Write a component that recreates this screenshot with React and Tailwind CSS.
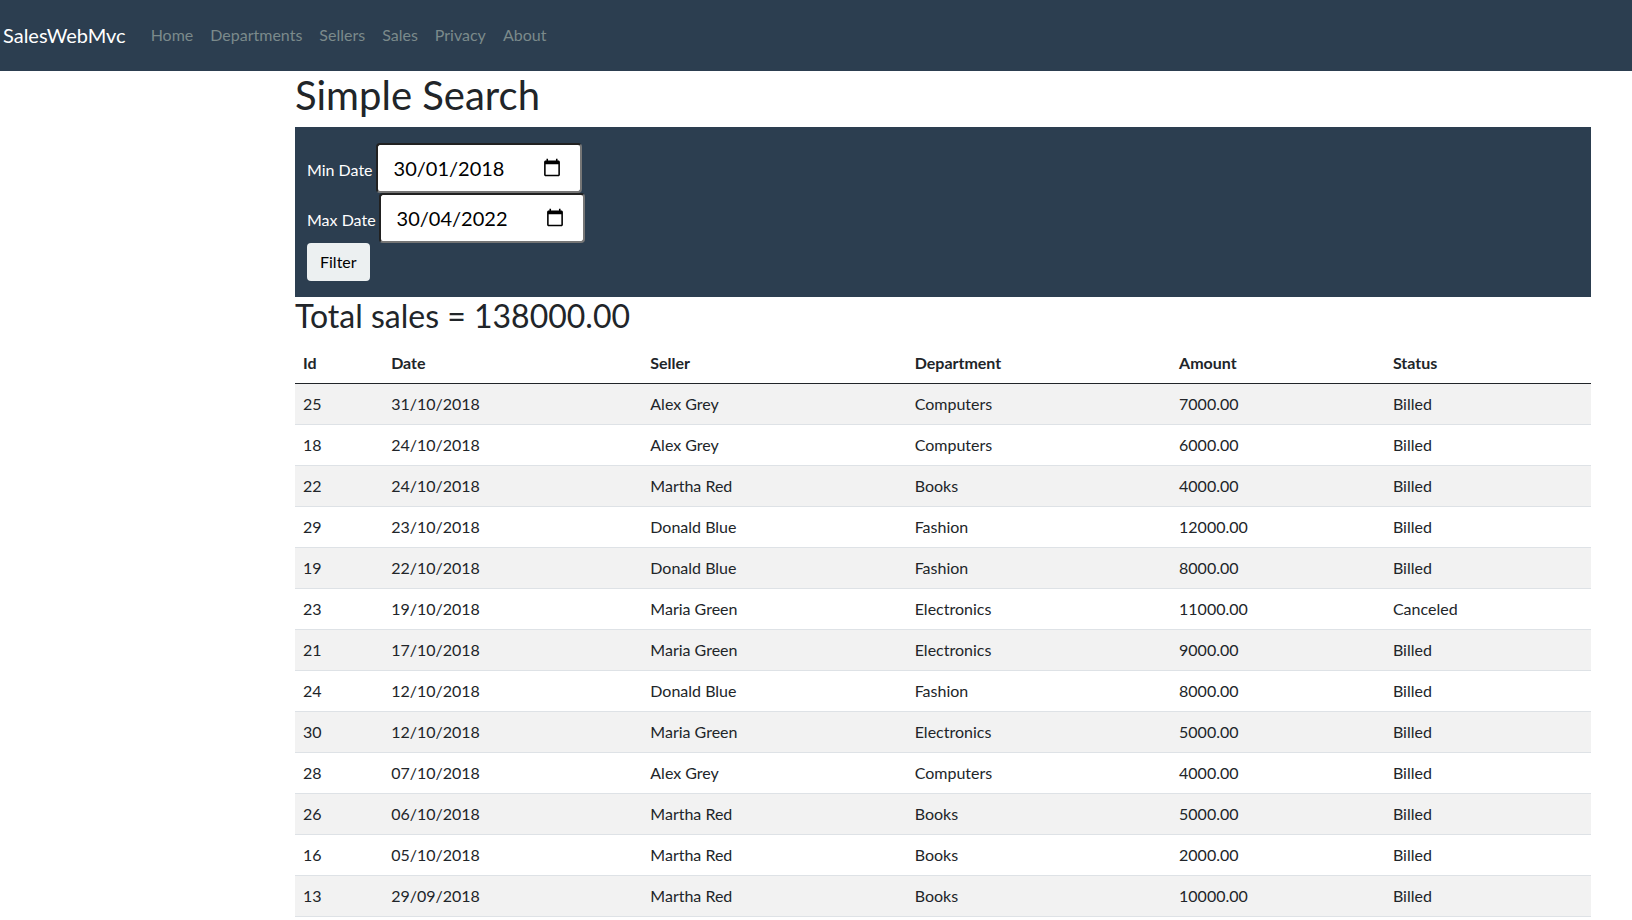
const links = ["Home", "Departments", "Sellers", "Sales", "Privacy", "About"];

const columns = [
  { name: "Id", width: "w-[6.8%]" },
  { name: "Date", width: "w-[20%]" },
  { name: "Seller", width: "w-[20.4%]" },
  { name: "Department", width: "w-[20.4%]" },
  { name: "Amount", width: "w-[16.5%]" },
  { name: "Status", width: "w-[15.9%]" },
];

const sales = [
  [25, "31/10/2018", "Alex Grey", "Computers", "7000.00", "Billed"],
  [18, "24/10/2018", "Alex Grey", "Computers", "6000.00", "Billed"],
  [22, "24/10/2018", "Martha Red", "Books", "4000.00", "Billed"],
  [29, "23/10/2018", "Donald Blue", "Fashion", "12000.00", "Billed"],
  [19, "22/10/2018", "Donald Blue", "Fashion", "8000.00", "Billed"],
  [23, "19/10/2018", "Maria Green", "Electronics", "11000.00", "Canceled"],
  [21, "17/10/2018", "Maria Green", "Electronics", "9000.00", "Billed"],
  [24, "12/10/2018", "Donald Blue", "Fashion", "8000.00", "Billed"],
  [30, "12/10/2018", "Maria Green", "Electronics", "5000.00", "Billed"],
  [28, "07/10/2018", "Alex Grey", "Computers", "4000.00", "Billed"],
  [26, "06/10/2018", "Martha Red", "Books", "5000.00", "Billed"],
  [16, "05/10/2018", "Martha Red", "Books", "2000.00", "Billed"],
  [13, "29/09/2018", "Martha Red", "Books", "10000.00", "Billed"],
];

// The grid on the fields wrapper keeps day/month/year order in every locale.
function DateField({ id, label, value }) {
  return (
    <div className="flex items-baseline gap-[3px]">
      <label htmlFor={id} className="text-white">
        {label}
      </label>
      <input
        id={id}
        name={id}
        type="date"
        defaultValue={value}
        className="h-[50px] w-[206px] rounded border-2 border-[#767676] border-t-[#212121] border-l-[#212121] bg-white px-4 py-2 text-xl leading-[30px] text-black [&::-webkit-datetime-edit-fields-wrapper]:grid [&::-webkit-datetime-edit-fields-wrapper]:grid-cols-[auto_auto_auto_auto_auto] [&::-webkit-datetime-edit-fields-wrapper]:justify-start [&::-webkit-datetime-edit-day-field]:col-start-1 [&::-webkit-datetime-edit-day-field]:row-start-1 [&::-webkit-datetime-edit-day-field]:px-0 [&::-webkit-datetime-edit-month-field]:col-start-3 [&::-webkit-datetime-edit-month-field]:row-start-1 [&::-webkit-datetime-edit-month-field]:px-0 [&::-webkit-datetime-edit-year-field]:col-start-5 [&::-webkit-datetime-edit-year-field]:row-start-1 [&::-webkit-datetime-edit-year-field]:px-0"
      />
    </div>
  );
}

export default function App() {
  return (
    <div className="bg-white font-['Lato',sans-serif] text-base text-[#212529]">
      <nav className="flex items-center bg-[#2c3e50] py-4 pl-[3px]">
        <a href="#" className="mr-[17px] text-xl leading-[39px] text-white">
          SalesWebMvc
        </a>
        <ul className="flex gap-px">
          {links.map((link) => (
            <li key={link}>
              <a href="#" className="block px-2 pt-[7px] pb-2 text-[#7b8a8b]">
                {link}
              </a>
            </li>
          ))}
        </ul>
      </nav>

      <main className="pr-[41px] pl-[295px]">
        <h1 className="mb-2 text-[40px] leading-[48px]">Simple Search</h1>

        <form className="bg-[#2c3e50] px-3 py-4" onSubmit={(e) => e.preventDefault()}>
          <DateField id="minDate" label="Min Date" value="2018-01-30" />
          <DateField id="maxDate" label="Max Date" value="2022-04-30" />
          <button
            type="submit"
            className="block rounded bg-[#ecf0f1] px-[13px] py-[7px] leading-6 text-black"
          >
            Filter
          </button>
        </form>

        <h2 className="mb-2 text-[32px] leading-[38px]">Total sales = 138000.00</h2>

        <table className="w-full table-fixed border-separate border-spacing-0 text-left">
          <thead>
            <tr>
              {columns.map(({ name, width }) => (
                <th
                  key={name}
                  scope="col"
                  className={`${width} border-b border-[#212529] p-2 font-bold`}
                >
                  {name}
                </th>
              ))}
            </tr>
          </thead>
          <tbody>
            {sales.map((sale) => (
              <tr key={sale[0]} className="odd:bg-[#f2f2f2]">
                {sale.map((cell, i) => (
                  <td key={columns[i].name} className="border-b border-[#dee2e6] p-2">
                    {cell}
                  </td>
                ))}
              </tr>
            ))}
          </tbody>
        </table>
      </main>
    </div>
  );
}
